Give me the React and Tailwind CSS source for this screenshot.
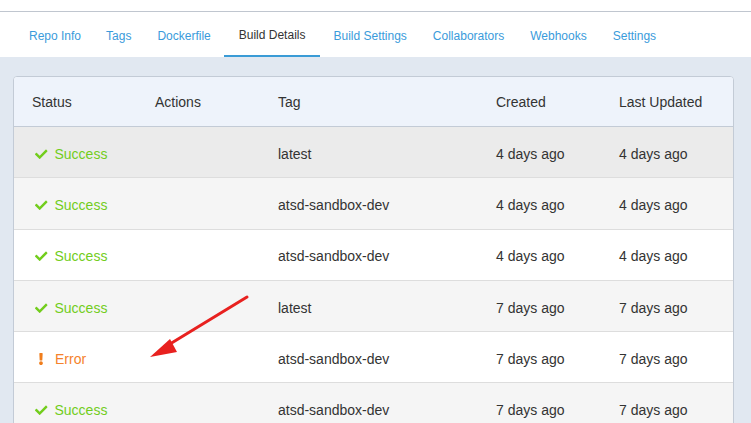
import React from 'react';
import { FaCheck, FaExclamation } from 'react-icons/fa';

const tabs = ['Repo Info', 'Tags', 'Dockerfile', 'Build Details', 'Build Settings', 'Collaborators', 'Webhooks', 'Settings'];

const builds = [
  { status: 'success', tag: 'latest', created: '4 days ago', updated: '4 days ago', bg: 'bg-[#ebebeb]' },
  { status: 'success', tag: 'atsd-sandbox-dev', created: '4 days ago', updated: '4 days ago', bg: 'bg-[#f5f5f5]' },
  { status: 'success', tag: 'atsd-sandbox-dev', created: '4 days ago', updated: '4 days ago', bg: 'bg-white' },
  { status: 'success', tag: 'latest', created: '7 days ago', updated: '7 days ago', bg: 'bg-[#f5f5f5]' },
  { status: 'error', tag: 'atsd-sandbox-dev', created: '7 days ago', updated: '7 days ago', bg: 'bg-white' },
  { status: 'success', tag: 'atsd-sandbox-dev', created: '7 days ago', updated: '7 days ago', bg: 'bg-[#f5f5f5]' },
];

const cols = 'grid grid-cols-[123px_123px_218px_123px_1fr]';

const Status = ({ status }) =>
  status === 'success' ? (
    <span className="flex items-center text-[#72cd1c]">
      <FaCheck className="ml-[3px] mr-[7px] text-[12.5px]" />
      Success
    </span>
  ) : (
    <span className="flex items-center text-[#f5822b]">
      <FaExclamation className="ml-[3px] mr-[8px] text-[12px] text-[#f07d1c]" />
      Error
    </span>
  );

const App = () => {
  return (
    <div className="relative w-[751px] h-[423px] overflow-hidden bg-[#e1e8f1] font-['Liberation_Sans',Arial,sans-serif] text-[14px] text-[#333]">
      {/* Top strip */}
      <div className="h-[12px] bg-white border-b border-[#c0c6cf]"></div>
      {/* Tabs */}
      <nav className="flex h-[45px] bg-white pl-[16px]">
        {tabs.map((t, i) => (
          <div
            key={t}
            className={
              t === 'Build Details'
                ? 'flex items-center px-[15px] text-[12px] text-[#333] border-b-2 border-[#3a9bd6] pt-[2px]'
                : i === 0
                ? 'flex items-center pl-[13px] pr-[12px] pt-[2px] text-[12px] text-[#3a9bdb]'
                : 'flex items-center px-[13px] pt-[2px] text-[12px] text-[#3a9bdb]'
            }
          >
            {t}
          </div>
        ))}
      </nav>
      {/* Build table */}
      <div className="ml-[13px] w-[721px] mt-[19px] border border-[#c3cbd6] rounded-t-[4px] overflow-hidden bg-white">
        <div className={`${cols} h-[50px] pt-[2px] items-center bg-[#eef3fb] border-b border-[#c3cbd6]`}>
          {['Status', 'Actions', 'Tag', 'Created', 'Last Updated'].map((h) => (
            <div key={h} className="pl-[18px]">{h}</div>
          ))}
        </div>
        {builds.map((b, i) => (
          <div key={i} className={`${cols} h-[51.3px] pt-[4px] items-center border-b border-[#dddddd] ${b.bg}`}>
            <div className="pl-[18px]"><Status status={b.status} /></div>
            <div></div>
            <div className="pl-[18px]">{b.tag}</div>
            <div className="pl-[18px]">{b.created}</div>
            <div className="pl-[18px]">{b.updated}</div>
          </div>
        ))}
      </div>
      {/* Annotation arrow */}
      <svg className="absolute left-0 top-0 pointer-events-none" width="751" height="423">
        <line x1="247" y1="297" x2="165" y2="347" stroke="#e8211f" strokeWidth="3" strokeLinecap="round" />
        <polygon points="150,357 170,339 177,352" fill="#e8211f" />
      </svg>
    </div>
  );
};

export default App;
